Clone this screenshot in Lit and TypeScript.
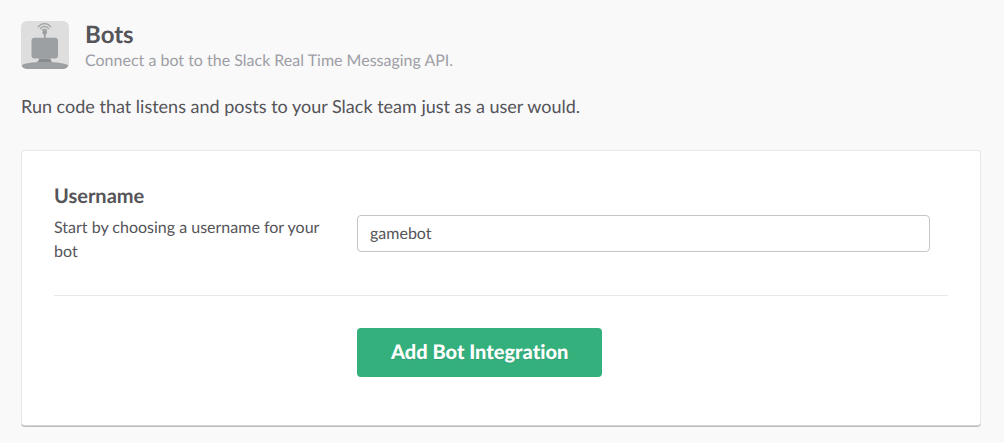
import { LitElement, html, css } from "lit";
import { customElement, property, state } from "lit/decorators.js";

@customElement("bot-icon")
class BotIcon extends LitElement {
  static styles = css`
    :host { display: block; width: 48px; height: 48px; }
    svg { display: block; width: 100%; height: 100%; border-radius: 6px; }
  `;

  render() {
    return html`
      <svg viewBox="0 0 48 48" aria-hidden="true">
        <rect width="48" height="48" fill="#dedede" />
        <g fill="none" stroke="#a2a3a5" stroke-width="1.3" stroke-linecap="round">
          <path d="M17.2 5.8C20.6 1.6 26.4 1.6 29.8 5.8" />
          <path d="M19.3 7.6C21.8 4.6 25.2 4.6 27.7 7.6" />
          <path d="M21.4 9.2C22.8 7.7 24.2 7.7 25.6 9.2" />
        </g>
        <circle cx="23.7" cy="11.4" r="2.3" fill="#9b9ea1" />
        <path d="M22.900 12h1.700v5h-1.700z" fill="#9b9ea1" />
        <rect x="10.5" y="16.7" width="26.500" height="20.800" rx="3" fill="#9da0a3" />
        <path d="M18 37.500H29.500C29.500 39.500 30.500 40 31.500 41.500H15.500C17 40 18 39.500 18 37.500z" fill="#898c8f" />
        <path d="M0 44.500C3 42.200 10 41 23.500 41S44 42.200 48 44.500V48H0z" fill="#9da0a3" />
      </svg>
    `;
  }
}

@customElement("app-root")
export class AppRoot extends LitElement {
  static styles = css`
    :host {
      display: block;
      box-sizing: border-box;
      min-height: 100vh;
      padding: 21px 23px 16px 21px;
      background: #f9f9f9;
      color: #555459;
      font-family: Lato, "Open Sans", sans-serif;
      font-size: 16px;
      line-height: 24px;
      font-variant-ligatures: none;
      text-rendering: geometricPrecision;
    }
    h1, p { margin: 0; }
    .header { display: flex; gap: 16px; }
    h1 { font-size: 24px; line-height: 28px; font-weight: 700; }
    .tagline { color: #9e9ea6; }
    .intro { margin-top: 21px; font-size: 18px; }
    .card {
      margin-top: 32px;
      padding: 32px 32px 48px;
      background: #fff;
      border: 1px solid #e8e8e8;
      border-bottom-color: #d4d4d4;
      border-radius: 4px;
      box-shadow: 0 1px 0 #bcbcbc;
    }
    .row {
      display: grid;
      grid-template-columns: 271px minmax(0, 1fr);
      column-gap: 32px;
      padding-right: 18px;
    }
    .field { padding-bottom: 31px; }
    .name { display: block; font-size: 20px; line-height: 26px; font-weight: 700; }
    .hint { display: block; margin-top: 7px; }
    input {
      box-sizing: border-box;
      width: 100%;
      height: 37px;
      margin-top: 32px;
      padding: 0 12px;
      border: 1px solid #c5c5c5;
      border-radius: 4px;
      background: #fff;
      color: inherit;
      font: inherit;
      text-rendering: inherit;
      outline: none;
    }
    input:focus { border-color: #2780f8; }
    hr { margin: 0 0 32px; border: 0; border-top: 1px solid #e8e8e8; }
    button {
      grid-column: 2;
      justify-self: start;
      height: 49px;
      padding: 0 34px 2px;
      border: 0;
      border-radius: 4px;
      background: #34b07d;
      color: #fff;
      font: 900 20px/24px Lato, "Open Sans", sans-serif;
      font-variant-ligatures: none;
      text-rendering: inherit;
      text-shadow: 0 1px 1px rgba(0, 0, 0, 0.1);
      cursor: pointer;
    }
  `;

  @property() heading = "Bots";
  @state() private username = "gamebot";

  private onInput(e: Event) {
    this.username = (e.target as HTMLInputElement).value;
  }

  render() {
    return html`
      <header class="header">
        <bot-icon></bot-icon>
        <div>
          <h1>${this.heading}</h1>
          <p class="tagline">Connect a bot to the Slack Real Time Messaging API.</p>
        </div>
      </header>
      <p class="intro">Run code that listens and posts to your Slack team just as a user would.</p>
      <form class="card" @submit=${(e: Event) => e.preventDefault()}>
        <div class="row field">
          <label for="username">
            <span class="name">Username</span>
            <span class="hint">Start by choosing a username for your bot</span>
          </label>
          <div>
            <input id="username" type="text" .value=${this.username} @input=${this.onInput} />
          </div>
        </div>
        <hr />
        <div class="row">
          <button type="submit">Add Bot Integration</button>
        </div>
      </form>
    `;
  }
}
